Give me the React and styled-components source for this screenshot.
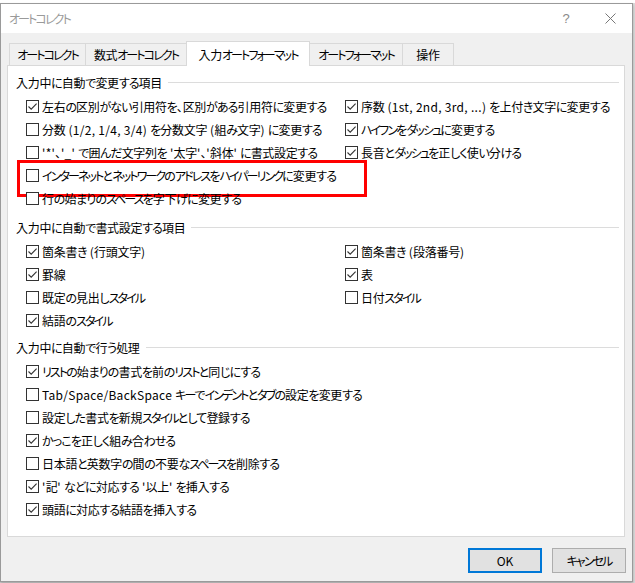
import React from "react";
import styled, { createGlobalStyle, css } from "styled-components";

const Global = createGlobalStyle`
  html, body { margin: 0; padding: 0; }
  body {
    background: #dcdcdc;
    font-family: "Noto Sans CJK JP", "Noto Sans", sans-serif;
    font-size: 12px;
    font-feature-settings: "palt";
    color: #000;
  }
  * { box-sizing: border-box; }
`;

const spacing = { kata: -1.9, hira: -0.9, kanji: -0.3, latin: 0.3 };

const Run = styled.span`
  letter-spacing: ${(p) => spacing[p.$kind]}px;
`;

const splitRe = /([\u30A0-\u30FF]+|[\u3040-\u309F]+|[\u3000-\u303F\u4E00-\u9FFF\uFF00-\uFFEF]+)/;

const kindOf = (s) => {
  const c = s.charCodeAt(0);
  if (c >= 0x30a0 && c <= 0x30ff) return "kata";
  if (c >= 0x3040 && c <= 0x309f) return "hira";
  if (c >= 0x3000) return "kanji";
  return "latin";
};

const Jp = ({ children }) => (
  <>
    {String(children)
      .split(splitRe)
      .filter(Boolean)
      .map((s, i) => (
        <Run key={i} $kind={kindOf(s)}>
          {s}
        </Run>
      ))}
  </>
);

const Page = styled.div`
  width: 635px;
  height: 583px;
  padding-top: 3px;
  background: linear-gradient(#fff 0 3px, #dcdcdc 3px);
`;

const Dialog = styled.div`
  width: 633px;
  background: #f0f0f0;
  border: 1px solid #9a9a9a;
  box-shadow: 0 2px 3px rgba(0, 0, 0, 0.25);
`;

const TitleBar = styled.div`
  height: 29px;
  background: #fff;
  display: flex;
  align-items: center;
  padding-left: 8px;
`;

const Title = styled.div`
  flex: 1;
  color: #9a9a9a;
  font-size: 12px;
`;

const TitleButton = styled.div`
  width: 44px;
  height: 29px;
  display: flex;
  align-items: center;
  justify-content: center;
  color: #8a8a8a;
  font-family: "Liberation Sans", sans-serif;
  font-size: 13px;
`;

const TabRow = styled.div`
  display: flex;
  align-items: flex-end;
  height: 32px;
  padding-left: 8px;
  position: relative;
  z-index: 2;
`;

const Tab = styled.div`
  width: ${(p) => p.$w}px;
  height: 22px;
  display: flex;
  align-items: center;
  justify-content: center;
  white-space: nowrap;
  background: #f0f0f0;
  border: 1px solid #d9d9d9;
  border-bottom: none;
  margin-left: -1px;
  &:first-child { margin-left: 0; }
  ${(p) =>
    p.$active &&
    css`
      height: 25px;
      margin-bottom: -1px;
      background: #fff;
      position: relative;
      z-index: 3;
    `}
`;

const Panel = styled.div`
  margin: 0 7px 0 6px;
  height: 472px;
  background: #fff;
  border: 1px solid #d9d9d9;
  padding: 7px 5px 0 8px;
  position: relative;
  z-index: 1;
`;

const SectionHeader = styled.div`
  height: 18px;
  display: flex;
  align-items: center;
  white-space: nowrap;
  margin-top: ${(p) => p.$top}px;
  margin-bottom: 4px;
  &::after {
    content: "";
    flex: 1;
    margin-left: 6px;
    border-top: 1px solid #dcdcdc;
  }
`;

const Grid = styled.div`
  display: grid;
  grid-template-columns: 319px 1fr;
  grid-auto-rows: 23px;
  padding-left: 10px;
`;

const Item = styled.label`
  display: flex;
  align-items: center;
  gap: 3px;
  white-space: nowrap;
  grid-column: ${(p) => (p.$span ? "1 / -1" : "auto")};
  position: relative;
  ${(p) =>
    p.$highlight &&
    css`
      &::before {
        content: "";
        position: absolute;
        left: -9px;
        top: -4px;
        width: 344px;
        height: 31px;
        border: 3px solid #ff0000;
        pointer-events: none;
      }
    `}
`;

const Box = styled.span`
  width: 13px;
  height: 13px;
  flex: none;
  border: 1px solid #333;
  background: #fff;
  display: flex;
  align-items: center;
  justify-content: center;
`;

const Footer = styled.div`
  display: flex;
  justify-content: flex-end;
  gap: 10px;
  padding: 11px 6px 8px 0;
`;

const Button = styled.div`
  width: 74px;
  height: 25px;
  display: flex;
  align-items: center;
  justify-content: center;
  background: #e1e1e1;
  border: ${(p) => (p.$default ? "2px solid #0078d7" : "1px solid #adadad")};
  font-size: 12px;
`;

const Check = ({ checked }) => (
  <Box>
    {checked && (
      <svg width="11" height="11" viewBox="0 0 11 11">
        <path d="M1.5 5.5 L4.2 8.2 L9.6 2.6" fill="none" stroke="#333" strokeWidth="1.1" />
      </svg>
    )}
  </Box>
);

const CheckItem = ({ checked, children, ...rest }) => (
  <Item {...rest}>
    <Check checked={checked} />
    <span>
      <Jp>{children}</Jp>
    </span>
  </Item>
);

export default function App() {
  return (
    <>
      <Global />
      <Page>
        <Dialog>
          <TitleBar>
            <Title>
              <Jp>オートコレクト</Jp>
            </Title>
            <TitleButton>?</TitleButton>
            <TitleButton>
              <svg width="11" height="11" viewBox="0 0 11 11">
                <path d="M0.5 0.5 L10.5 10.5 M10.5 0.5 L0.5 10.5" stroke="#777" strokeWidth="1" />
              </svg>
            </TitleButton>
          </TitleBar>
          <TabRow>
            <Tab $w={77}><Jp>オートコレクト</Jp></Tab>
            <Tab $w={102}><Jp>数式オートコレクト</Jp></Tab>
            <Tab $w={124} $active><Jp>入力オートフォーマット</Jp></Tab>
            <Tab $w={94}><Jp>オートフォーマット</Jp></Tab>
            <Tab $w={52}><Jp>操作</Jp></Tab>
          </TabRow>
          <Panel>
            <SectionHeader $top={0}><Jp>入力中に自動で変更する項目</Jp></SectionHeader>
            <Grid>
              <CheckItem checked>左右の区別がない引用符を、区別がある引用符に変更する</CheckItem>
              <CheckItem checked>序数 (1st, 2nd, 3rd, ...) を上付き文字に変更する</CheckItem>
              <CheckItem>分数 (1/2, 1/4, 3/4) を分数文字 (組み文字) に変更する</CheckItem>
              <CheckItem checked>ハイフンをダッシュに変更する</CheckItem>
              <CheckItem>'*'、'_' で囲んだ文字列を '太字'、'斜体' に書式設定する</CheckItem>
              <CheckItem checked>長音とダッシュを正しく使い分ける</CheckItem>
              <CheckItem $span $highlight>インターネットとネットワークのアドレスをハイパーリンクに変更する</CheckItem>
              <CheckItem $span>行の始まりのスペースを字下げに変更する</CheckItem>
            </Grid>
            <SectionHeader $top={8}><Jp>入力中に自動で書式設定する項目</Jp></SectionHeader>
            <Grid>
              <CheckItem checked>箇条書き (行頭文字)</CheckItem>
              <CheckItem checked>箇条書き (段落番号)</CheckItem>
              <CheckItem checked>罫線</CheckItem>
              <CheckItem checked>表</CheckItem>
              <CheckItem>既定の見出しスタイル</CheckItem>
              <CheckItem>日付スタイル</CheckItem>
              <CheckItem checked>結語のスタイル</CheckItem>
            </Grid>
            <SectionHeader $top={6}><Jp>入力中に自動で行う処理</Jp></SectionHeader>
            <Grid>
              <CheckItem $span checked>リストの始まりの書式を前のリストと同じにする</CheckItem>
              <CheckItem $span>Tab/Space/BackSpace キーでインデントとタブの設定を変更する</CheckItem>
              <CheckItem $span>設定した書式を新規スタイルとして登録する</CheckItem>
              <CheckItem $span checked>かっこを正しく組み合わせる</CheckItem>
              <CheckItem $span>日本語と英数字の間の不要なスペースを削除する</CheckItem>
              <CheckItem $span checked>'記' などに対応する '以上' を挿入する</CheckItem>
              <CheckItem $span checked>頭語に対応する結語を挿入する</CheckItem>
            </Grid>
          </Panel>
          <Footer>
            <Button $default>OK</Button>
            <Button><Jp>キャンセル</Jp></Button>
          </Footer>
        </Dialog>
      </Page>
    </>
  );
}
